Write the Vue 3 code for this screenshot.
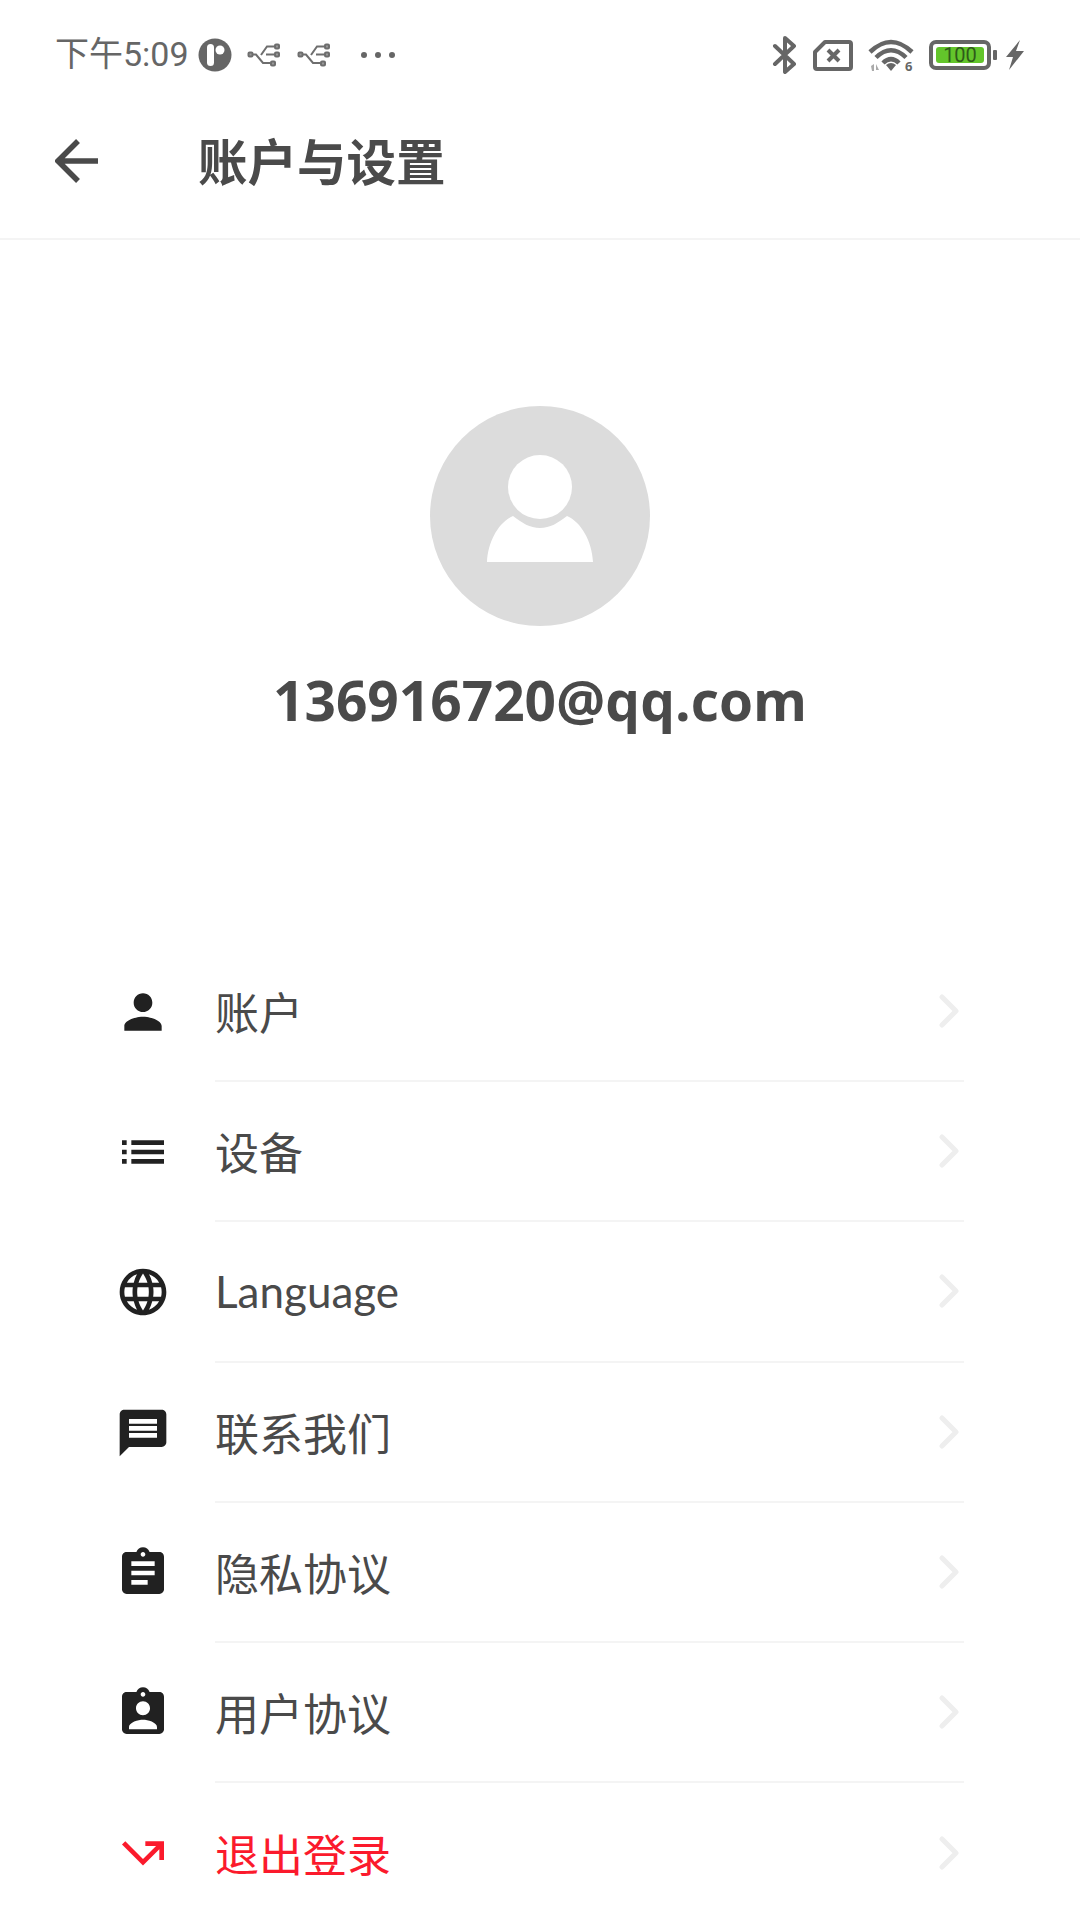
<template>
  <div class="page">
    <div class="status-bar">
      <div class="status-left">
        <span class="time">下午5:09</span>
        <svg class="app-dot" viewBox="0 0 34 34">
          <circle cx="17" cy="17" r="16.5" fill="#666" />
          <rect x="9" y="6" width="7" height="22" rx="3.5" fill="#fff" />
          <circle cx="22" cy="12" r="4.5" fill="#fff" />
        </svg>
        <svg v-for="n in 2" :key="n" class="share" viewBox="0 0 34 24">
          <g fill="#999" stroke="#6e6e6e" stroke-width="2">
            <rect x="1.500" y="9.500" width="4" height="4" rx="1" />
            <rect x="28" y="1.500" width="4" height="4" rx="1" />
            <rect x="28" y="9.500" width="4" height="4" rx="1" />
            <rect x="24" y="18.500" width="4" height="4" rx="1" />
          </g>
          <path d="M6 11.500h3l7 8.500h7M14 12l6-8.500h7M19 11.500h8" fill="none" stroke="#6e6e6e" stroke-width="2" />
        </svg>
        <div class="dots"><i></i><i></i><i></i></div>
      </div>
      <div class="status-right">
        <svg class="bluetooth" viewBox="0 0 26 38">
          <path d="M3 10l19 18-9 8V2l9 8L3 28" fill="none" stroke="#666" stroke-width="4" stroke-linecap="round" stroke-linejoin="round" />
        </svg>
        <svg class="sim" viewBox="0 0 40 31">
          <path d="M12 2h24a2 2 0 0 1 2 2v23a2 2 0 0 1-2 2H4a2 2 0 0 1-2-2V12z" fill="none" stroke="#666" stroke-width="4" stroke-linejoin="round" />
          <path d="M15 10l11 11M26 10L15 21" fill="none" stroke="#666" stroke-width="4" />
        </svg>
        <div class="wifi">
          <svg viewBox="0 0 46 34">
            <g fill="none" stroke="#666" stroke-width="4.500">
              <path d="M2 14Q23-6 44 14" />
              <path d="M8 19.500Q23 5 38 19.500" />
              <path d="M15 25Q23 17 31 25" />
            </g>
            <path d="M18 27Q23 23 28 27L23 33z" fill="#666" />
            <path d="M3 28l3-2v7H4zM8 26l3 6H8z" fill="#aaa" />
            <text x="37" y="33" class="wifi-six">6</text>
          </svg>
        </div>
        <div class="battery">
          <div class="battery-body"><span class="battery-fill">100</span></div>
          <i class="battery-nub"></i>
        </div>
        <svg class="bolt" viewBox="0 0 20 30">
          <path d="M15 0L1 17h7L4 30l15-19h-8z" fill="#666" />
        </svg>
      </div>
    </div>

    <header class="app-header">
      <svg class="back" viewBox="0 0 44 44">
        <path d="M43 22H4M23 2L3 22l20 20" fill="none" stroke="#4a4a4a" stroke-width="5.500" />
      </svg>
      <h1 class="title">账户与设置</h1>
    </header>

    <section class="profile">
      <svg class="avatar" viewBox="0 0 220 220">
        <circle cx="110" cy="110" r="110" fill="#dcdcdc" />
        <ellipse cx="110" cy="81" rx="32" ry="32" fill="#fff" />
        <path d="M57 156C58 135 69 116 83 110C92 117 100 122 110 122C120 122 128 117 137 110C151 116 162 135 163 156Z" fill="#fff" />
      </svg>
      <div class="email">136916720@qq.com</div>
    </section>

    <ul class="menu">
      <li v-for="item in items" :key="item.label" class="row" :class="{ danger: item.danger }">
        <svg class="row-icon" viewBox="0 0 24 24"><path :d="item.icon" /></svg>
        <div class="row-body">
          <span class="row-label">{{ item.label }}</span>
          <svg class="chevron" viewBox="0 0 20 34">
            <path d="M3 3l14 14L3 31" fill="none" stroke="#eeeeee" stroke-width="5" stroke-linecap="round" stroke-linejoin="round" />
          </svg>
        </div>
      </li>
    </ul>
  </div>
</template>

<script setup>
const items = [
  {
    label: '账户',
    icon: 'M12 12c2.21 0 4-1.79 4-4s-1.79-4-4-4-4 1.79-4 4 1.79 4 4 4zm0 2c-2.67 0-8 1.34-8 4v2h16v-2c0-2.66-5.33-4-8-4z'
  },
  {
    label: '设备',
    icon: 'M3 13h2v-2H3v2zm0 4h2v-2H3v2zm0-8h2V7H3v2zm4 4h14v-2H7v2zm0 4h14v-2H7v2zM7 7v2h14V7H7z'
  },
  {
    label: 'Language',
    icon: 'M11.99 2C6.47 2 2 6.48 2 12s4.47 10 9.99 10C17.52 22 22 17.52 22 12S17.52 2 11.99 2zm6.93 6h-2.95c-.32-1.25-.78-2.45-1.38-3.56 1.84.63 3.37 1.91 4.33 3.56zM12 4.040c.83 1.2 1.48 2.53 1.91 3.96h-3.82c.43-1.43 1.08-2.76 1.91-3.96zM4.260 14C4.100 13.360 4 12.690 4 12s.1-1.360.26-2h3.380c-.08.66-.14 1.320-.14 2 0 .68.06 1.340.14 2H4.260zm.82 2h2.950c.32 1.250.78 2.450 1.380 3.560-1.840-.63-3.370-1.900-4.330-3.560zm2.950-8H5.080c.96-1.660 2.490-2.930 4.330-3.560C8.810 5.550 8.350 6.750 8.030 8zM12 19.960c-.83-1.200-1.480-2.530-1.910-3.960h3.820c-.43 1.430-1.080 2.760-1.910 3.960zM14.340 14H9.660c-.09-.66-.16-1.320-.16-2 0-.68.07-1.350.16-2h4.680c.09.65.16 1.320.16 2 0 .68-.07 1.340-.16 2zm.25 5.560c.6-1.110 1.060-2.310 1.380-3.560h2.950c-.96 1.650-2.490 2.930-4.330 3.560zM16.360 14c.08-.66.14-1.320.14-2 0-.68-.06-1.340-.14-2h3.380c.16.64.26 1.310.26 2s-.1 1.360-.26 2h-3.380z'
  },
  {
    label: '联系我们',
    icon: 'M20 2H4c-1.100 0-1.990.9-1.990 2L2 22l4-4h14c1.100 0 2-.9 2-2V4c0-1.100-.9-2-2-2zm-2 12H6v-2h12v2zm0-3H6V9h12v2zm0-3H6V6h12v2z'
  },
  {
    label: '隐私协议',
    icon: 'M19 3h-4.180C14.400 1.840 13.300 1 12 1c-1.300 0-2.400.84-2.820 2H5c-1.100 0-2 .9-2 2v14c0 1.100.9 2 2 2h14c1.100 0 2-.9 2-2V5c0-1.100-.9-2-2-2zm-7 0c.55 0 1 .45 1 1s-.45 1-1 1-1-.45-1-1 .45-1 1-1zm2 14H7v-2h7v2zm3-4H7v-2h10v2zm0-4H7V7h10v2z'
  },
  {
    label: '用户协议',
    icon: 'M19 3h-4.180C14.400 1.840 13.300 1 12 1c-1.300 0-2.400.84-2.820 2H5c-1.100 0-2 .9-2 2v14c0 1.100.9 2 2 2h14c1.100 0 2-.9 2-2V5c0-1.100-.9-2-2-2zm-7 0c.55 0 1 .45 1 1s-.45 1-1 1-1-.45-1-1 .45-1 1-1zm0 4c1.660 0 3 1.340 3 3s-1.340 3-3 3-3-1.340-3-3 1.340-3 3-3zm6 12H6v-1c0-2 4-3.100 6-3.100s6 1.100 6 3.100v1z'
  },
  {
    label: '退出登录',
    danger: true,
    icon: 'M3 8.410l9 9 7-7V15h2V7h-8v2h4.590L12 14.590 4.410 7 3 8.410z'
  }
]
</script>

<style scoped>
.page {
  width: 1080px;
  height: 1920px;
  overflow: hidden;
  background: #fff;
  font-family: "Open Sans", "Noto Sans CJK SC", sans-serif;
  color: #4a4a4a;
}

/* status bar */
.status-bar {
  height: 110px;
  display: flex;
  align-items: center;
  justify-content: space-between;
  padding: 0 55px 0 56px;
  box-sizing: border-box;
}
.status-left,
.status-right {
  display: flex;
  align-items: center;
}
.time {
  font-family: Roboto, "Noto Sans CJK SC", sans-serif;
  font-size: 34px;
  line-height: 40px;
  color: #666;
  margin-right: 9px;
  margin-left: -1px;
  padding-bottom: 2px;
}
.app-dot {
  width: 34px;
  height: 34px;
  margin-right: 15px;
}
.share {
  width: 34px;
  height: 24px;
  margin-right: 16px;
}
.dots {
  display: flex;
  gap: 8px;
  margin-left: 14px;
}
.dots i {
  width: 6px;
  height: 6px;
  border-radius: 50%;
  background: #666;
}
.bluetooth {
  width: 26px;
  height: 38px;
  margin-right: 15px;
}
.sim {
  width: 40px;
  height: 31px;
  margin-right: 15px;
}
.wifi svg {
  display: block;
  width: 46px;
  height: 34px;
  overflow: visible;
}
.wifi-six {
  font-family: "Open Sans", sans-serif;
  font-size: 13px;
  font-weight: 700;
  fill: #666;
}
.battery {
  display: flex;
  align-items: center;
  margin-left: 15px;
}
.battery-body {
  width: 62px;
  height: 30px;
  box-sizing: border-box;
  border: 4px solid #666;
  border-radius: 7px;
  padding: 3px;
  display: flex;
}
.battery-fill {
  flex: 1;
  background: #63c52b;
  border-radius: 3px;
  font-family: Roboto, sans-serif;
  font-size: 20px;
  line-height: 16px;
  text-align: center;
  color: #2f5a1a;
}
.battery-nub {
  width: 4px;
  height: 10px;
  margin-left: 2px;
  border-radius: 1px;
  background: #666;
}
.bolt {
  width: 20px;
  height: 30px;
  margin-left: 8px;
}

/* header */
.app-header {
  height: 130px;
  display: flex;
  align-items: center;
  padding: 0 0 26px 55px;
  box-sizing: border-box;
  border-bottom: 2px solid #f4f4f4;
}
.back {
  width: 44px;
  height: 44px;
}
.title {
  margin: 0 0 2px 99px;
  font-size: 49.500px;
  font-weight: 700;
  color: #4a4a4a;
}

/* profile */
.profile {
  display: flex;
  flex-direction: column;
  align-items: center;
  padding-top: 166px;
}
.avatar {
  display: block;
  width: 220px;
  height: 220px;
}
.email {
  margin-top: 38px;
  font-size: 55px;
  line-height: 72px;
  font-weight: 700;
  color: #4a4a4a;
}

/* menu */
.menu {
  list-style: none;
  margin: 0;
  padding: 0 0 0 115px;
  margin-top: 206px;
}
.row {
  display: flex;
  align-items: center;
  height: 140.200px;
}
.row-icon {
  width: 56px;
  height: 56px;
  margin-right: 44px;
  fill: #212121;
  flex: none;
}
.row-body {
  width: 749px;
  height: 100%;
  box-sizing: border-box;
  display: flex;
  align-items: center;
  justify-content: space-between;
  padding-right: 5px;
  border-bottom: 2px solid #f4f4f4;
}
.row:last-child .row-body {
  border-bottom: 0;
}
.row-label {
  font-family: Lato, "Noto Sans CJK SC", sans-serif;
  font-size: 44px;
  color: #4a4a4a;
}
.chevron {
  width: 20px;
  height: 34px;
}
.danger .row-icon {
  fill: #fb1a2c;
}
.danger .row-label {
  color: #fb1a2c;
}
</style>
